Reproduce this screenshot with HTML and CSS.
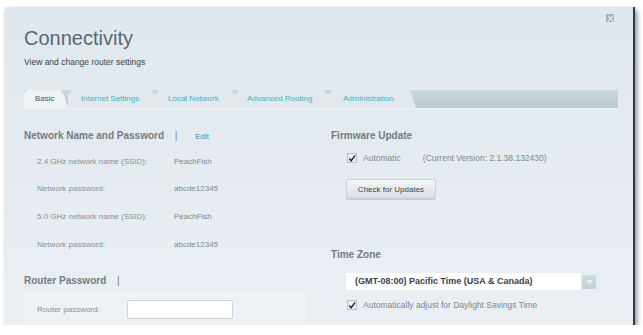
FILE: index.html
```html
<!DOCTYPE html>
<html lang="en">

<head>
  <meta charset="UTF-8">
  <title>Connectivity</title>
  <link rel="stylesheet" href="styles.css">
</head>

<body>

  <div class="window">
    <span class="close-btn">
      <svg width="7" height="7" viewBox="0 0 7 7"><path d="M1 1L6 6M6 1L1 6" stroke="#e6e6e6" stroke-width="1.2"/></svg>
    </span>

    <div class="header">
      <h1>Connectivity</h1>
      <p>View and change router settings</p>
    </div>

    <div class="tabs">
      <a class="tab active">Basic</a>
      <a class="tab">Internet Settings</a>
      <a class="tab">Local Network</a>
      <a class="tab">Advanced Routing</a>
      <a class="tab last">Administration</a>
    </div>

    <div class="content">
      <div class="col">
        <h2>Network Name and Password <span class="sep">|</span> <a class="edit">Edit</a></h2>
        <div class="row"><span class="label">2.4 GHz network name (SSID):</span><span class="value">PeachFish</span></div>
        <div class="row"><span class="label">Network password:</span><span class="value">abcde12345</span></div>
        <div class="row"><span class="label">5.0 GHz network name (SSID):</span><span class="value">PeachFish</span></div>
        <div class="row"><span class="label">Network password:</span><span class="value">abcde12345</span></div>

        <h2 class="router-title">Router Password <span class="sep">|</span></h2>
        <div class="router-box">
          <span class="label">Router password:</span>
          <input type="password" class="text-input">
        </div>
      </div>

      <div class="col right">
        <h2>Firmware Update</h2>
        <div class="check-row">
          <span class="checkbox"><svg width="9" height="9" viewBox="0 0 9 9"><path d="M1.5 4.5L3.5 7L8 1" fill="none" stroke="#1e2a33" stroke-width="1.6"/></svg></span>
          <span class="check-label">Automatic</span>
          <span class="version">(Current Version: 2.1.38.132430)</span>
        </div>
        <button class="btn">Check for Updates</button>

        <h2 class="tz-title">Time Zone</h2>
        <div class="select">
          <span class="select-text">(GMT-08:00) Pacific Time (USA &amp; Canada)</span>
          <span class="select-arrow"><svg width="7" height="4" viewBox="0 0 7 4"><path d="M0 0H7L3.5 4Z" fill="#eef3f6"/></svg></span>
        </div>
        <div class="check-row">
          <span class="checkbox"><svg width="9" height="9" viewBox="0 0 9 9"><path d="M1.5 4.5L3.5 7L8 1" fill="none" stroke="#1e2a33" stroke-width="1.6"/></svg></span>
          <span class="check-label">Automatically adjust for Daylight Savings Time</span>
        </div>
      </div>
    </div>
  </div>

</body>

</html>
```

FILE: styles.css
```css
* {
  box-sizing: border-box;
  margin: 0;
  padding: 0;
  font-family: 'Liberation Sans', Arial, sans-serif;
}

body {
  background: #fff;
  overflow: hidden;
}

.window {
  position: relative;
  margin: 7px 0 0 5px;
  width: 630px;
  height: 318px;
  background: linear-gradient(#dfe8ef, #e4ebf0 40%, #e9eff3);
  border-right: 2px solid #2c3c4c;
  box-shadow: 2px 3px 5px rgba(0, 0, 0, 0.45);
}

.close-btn {
  position: absolute;
  top: 7px;
  right: 19px;
  width: 8px;
  height: 8px;
  background: #a9b1b6;
  display: flex;
  align-items: center;
  justify-content: center;
}

.header {
  height: 83px;
  padding: 19px 0 0 19px;
}

.header h1 {
  font-weight: normal;
  font-size: 20px;
  line-height: 24px;
  color: #5a6771;
}

.header p {
  margin-top: 7px;
  font-size: 8.5px;
  color: #3c4247;
}

.tabs {
  display: flex;
  margin-left: 19px;
  width: 594px;
  height: 18px;
  background: linear-gradient(#cbd8de, #b9c9d0);
  box-shadow: 0 1px 0 #f1f4f6;
}

.tab {
  height: 18px;
  line-height: 18px;
  font-size: 8px;
  color: #3bb3c6;
  background: #e2e9ed;
  clip-path: polygon(4px 0, calc(100% - 4px) 0, 100% 5px, 100% 100%, 0 100%, 0 5px);
}

.tab:nth-child(1) { width: 44px; padding-left: 11px; }
.tab:nth-child(2) { width: 87px; padding-left: 13px; }
.tab:nth-child(3) { width: 80px; padding-left: 13px; }
.tab:nth-child(4) { width: 93px; padding-left: 12px; }

.tab.active {
  color: #4b545b;
  background: #f0f3f5;
  clip-path: polygon(3px 0, calc(100% - 8px) 0, calc(100% - 4px) 5px, 100% 100%, 0 100%, 0 3px);
}

.tab.last {
  width: 88px;
  padding-left: 15px;
  clip-path: polygon(4px 0, calc(100% - 6px) 0, 100% 100%, 0 100%, 0 5px);
}

.content {
  display: grid;
  grid-template-columns: 306px 1fr;
  padding: 22px 0 0 19px;
}

.col h2 {
  font-size: 10px;
  font-weight: bold;
  color: #737b82;
  height: 12px;
  line-height: 12px;
}

.sep {
  font-weight: normal;
  margin: 0 15px 0 8px;
}

.edit {
  font-weight: normal;
  font-size: 8px;
  color: #3b8fd0;
}

.row {
  display: flex;
  height: 28px;
  align-items: center;
  padding-left: 13px;
}

.row:nth-of-type(1) { margin-top: 6px; height: 26px; }

.label {
  width: 137px;
  font-size: 8px;
  color: #868e94;
}

.value {
  font-size: 8px;
  color: #80888e;
}

.router-title {
  margin-top: 17px;
}

.router-title .sep {
  margin-left: 8px;
}

.router-box {
  margin-top: 3px;
  width: 282px;
  height: 38px;
  background: #eef2f5;
  display: flex;
  align-items: center;
  padding-left: 13px;
}

.router-box .label {
  width: 90px;
}

.text-input {
  width: 106px;
  height: 19px;
  border: 1px solid #cbd4da;
  border-radius: 2px;
  background: #fff;
}

.right h2 {
  padding-left: 1px;
}

.check-row {
  display: flex;
  align-items: center;
  padding-left: 17px;
  height: 14px;
}

.right > .check-row:nth-of-type(1) {
  margin-top: 9px;
}

.checkbox {
  width: 10px;
  height: 10px;
  background: #e9eef1;
  border: 1px solid #b8c2c8;
  display: flex;
  align-items: center;
  justify-content: center;
  margin-right: 6px;
}

.check-label {
  font-size: 8.5px;
  color: #80888e;
}

.version {
  font-size: 8.5px;
  color: #80888e;
  margin-left: 22px;
}

.btn {
  display: block;
  margin: 14px 0 0 16px;
  width: 90px;
  height: 20px;
  font-size: 8px;
  color: #3c454c;
  background: linear-gradient(#f3f6f8, #d5dfe5);
  border: 1px solid #c6d0d6;
  border-radius: 2px;
  box-shadow: 0 1px 1px rgba(0, 0, 0, 0.15);
}

.tz-title {
  margin-top: 50px;
}

.select {
  display: flex;
  align-items: center;
  margin: 12px 0 0 16px;
  height: 17px;
}

.select-text {
  width: 235px;
  height: 17px;
  line-height: 17px;
  background: #fff;
  padding-left: 9px;
  font-size: 9px;
  font-weight: bold;
  color: #3a4248;
}

.select-arrow {
  width: 14px;
  height: 14px;
  margin-left: 1px;
  background: linear-gradient(#cfdce2, #bfd0d8);
  display: flex;
  align-items: center;
  justify-content: center;
}

.select + .check-row {
  margin-top: 8px;
}
```
